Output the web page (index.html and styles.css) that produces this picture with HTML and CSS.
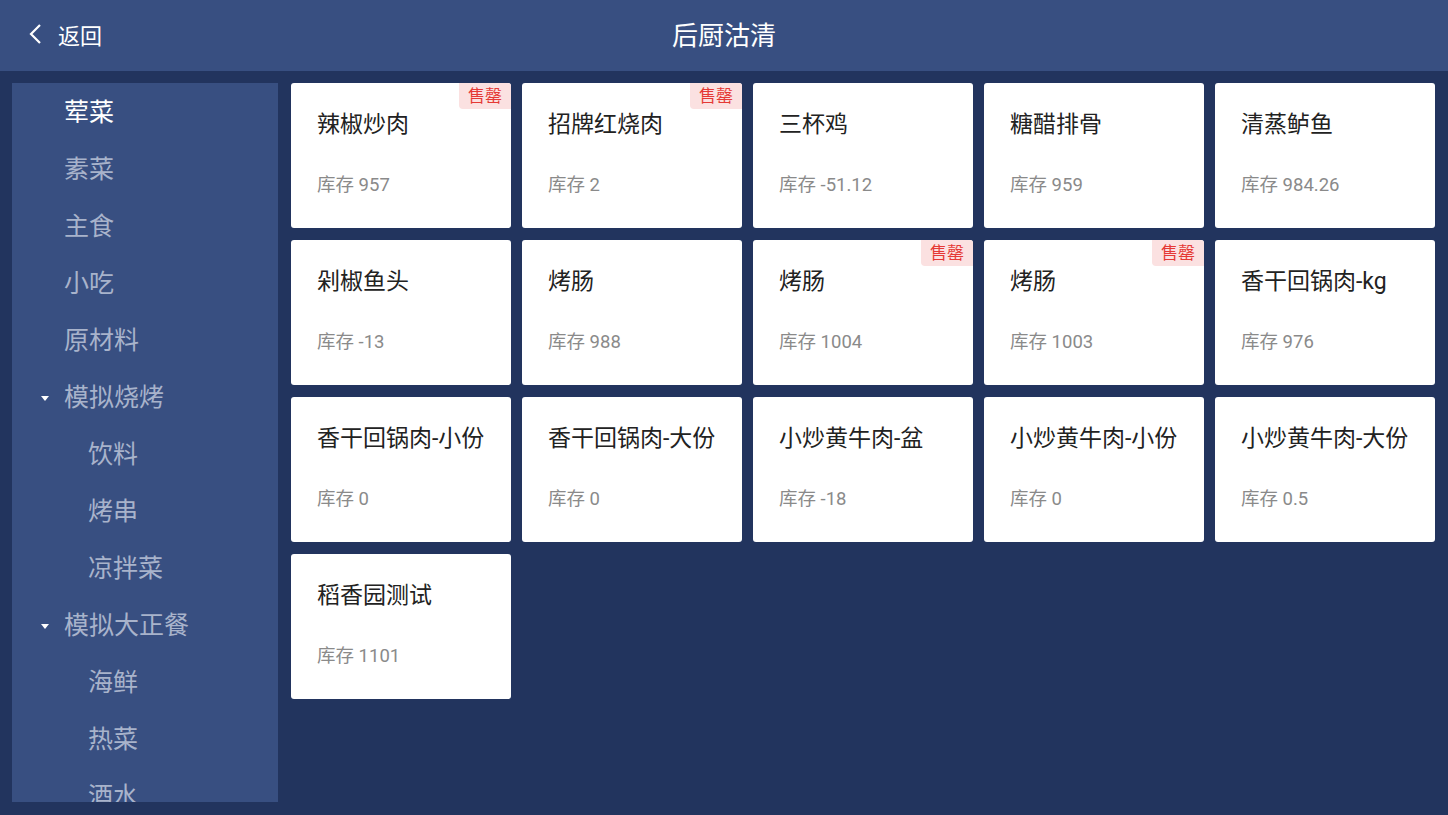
FILE: index.html
```html
<!DOCTYPE html>
<html>
<head>
  <meta charset="utf-8">
  <title>后厨沽清</title>
  <link rel="stylesheet" href="styles.css">
</head>
<body>
  <div class="top-bar">
    <div class="back">
      <svg width="16" height="24" viewBox="0 0 16 24"><path d="M12 3 L3 12 L12 21" fill="none" stroke="#fff" stroke-width="2.2"/></svg>
      <span>返回</span>
    </div>
    <div class="title">后厨沽清</div>
  </div>

  <div class="main">
    <div class="side-menu">
      <div class="menu-item active">荤菜</div>
      <div class="menu-item">素菜</div>
      <div class="menu-item">主食</div>
      <div class="menu-item">小吃</div>
      <div class="menu-item">原材料</div>
      <div class="menu-item group"><i class="caret"></i>模拟烧烤</div>
      <div class="menu-item sub">饮料</div>
      <div class="menu-item sub">烤串</div>
      <div class="menu-item sub">凉拌菜</div>
      <div class="menu-item group"><i class="caret"></i>模拟大正餐</div>
      <div class="menu-item sub">海鲜</div>
      <div class="menu-item sub">热菜</div>
      <div class="menu-item sub">酒水</div>
    </div>

    <div class="dish-grid">
      <div class="dish"><span class="sold-out">售罄</span><div class="name">辣椒炒肉</div><div class="stock">库存 957</div></div>
      <div class="dish"><span class="sold-out">售罄</span><div class="name">招牌红烧肉</div><div class="stock">库存 2</div></div>
      <div class="dish"><div class="name">三杯鸡</div><div class="stock">库存 -51.12</div></div>
      <div class="dish"><div class="name">糖醋排骨</div><div class="stock">库存 959</div></div>
      <div class="dish"><div class="name">清蒸鲈鱼</div><div class="stock">库存 984.26</div></div>

      <div class="dish"><div class="name">剁椒鱼头</div><div class="stock">库存 -13</div></div>
      <div class="dish"><div class="name">烤肠</div><div class="stock">库存 988</div></div>
      <div class="dish"><span class="sold-out">售罄</span><div class="name">烤肠</div><div class="stock">库存 1004</div></div>
      <div class="dish"><span class="sold-out">售罄</span><div class="name">烤肠</div><div class="stock">库存 1003</div></div>
      <div class="dish"><div class="name">香干回锅肉-kg</div><div class="stock">库存 976</div></div>

      <div class="dish"><div class="name">香干回锅肉-小份</div><div class="stock">库存 0</div></div>
      <div class="dish"><div class="name">香干回锅肉-大份</div><div class="stock">库存 0</div></div>
      <div class="dish"><div class="name">小炒黄牛肉-盆</div><div class="stock">库存 -18</div></div>
      <div class="dish"><div class="name">小炒黄牛肉-小份</div><div class="stock">库存 0</div></div>
      <div class="dish"><div class="name">小炒黄牛肉-大份</div><div class="stock">库存 0.5</div></div>

      <div class="dish"><div class="name">稻香园测试</div><div class="stock">库存 1101</div></div>
    </div>
  </div>
</body>
</html>
```

FILE: styles.css
```css
html, body {
  margin: 0;
  height: 100%;
}
body {
  background: #22345e;
  font-family: Roboto, "Noto Sans CJK SC", sans-serif;
  overflow: hidden;
}
.top-bar {
  position: relative;
  height: 71px;
  background: #384f81;
  display: flex;
  align-items: center;
  justify-content: center;
  padding-bottom: 4px;
  box-sizing: border-box;
}
.back {
  position: absolute;
  left: 28px;
  top: 0;
  bottom: 4px;
  display: flex;
  align-items: center;
  gap: 14px;
  color: #fff;
  font-size: 22px;
}
.title {
  color: #fff;
  font-size: 26px;
}
.main {
  display: flex;
  gap: 13px;
  padding: 12px 13px 13px 12px;
  height: 719px;
}
.side-menu {
  width: 266px;
  flex-shrink: 0;
  background: #384f81;
  overflow: hidden;
  padding-top: 13px;
  box-sizing: border-box;
}
.menu-item {
  height: 57px;
  line-height: 34px;
  padding-left: 52px;
  font-size: 25px;
  color: #a8b3cb;
  position: relative;
}
.menu-item.active {
  color: #fff;
}
.menu-item.sub {
  padding-left: 76px;
}
.caret {
  position: absolute;
  left: 29px;
  top: 15px;
  width: 0;
  height: 0;
  border-left: 4px solid transparent;
  border-right: 4px solid transparent;
  border-top: 5px solid #fff;
}
.dish-grid {
  flex: 1;
  display: grid;
  grid-template-columns: repeat(5, 220px);
  grid-auto-rows: 145px;
  column-gap: 11px;
  row-gap: 12px;
  align-content: start;
}
.dish {
  position: relative;
  background: #fff;
  border-radius: 3px;
  padding: 27px 26px 0;
}
.name {
  font-size: 23px;
  line-height: 30px;
  color: #222;
}
.stock {
  margin-top: 33px;
  font-size: 18.5px;
  line-height: 24px;
  color: #8a8a8a;
}
.sold-out {
  position: absolute;
  top: 0;
  right: 0;
  padding: 0 9px;
  height: 26px;
  line-height: 26px;
  font-size: 17px;
  color: #e53935;
  background: #fbe1e1;
  border-radius: 0 3px 0 4px;
}
```
